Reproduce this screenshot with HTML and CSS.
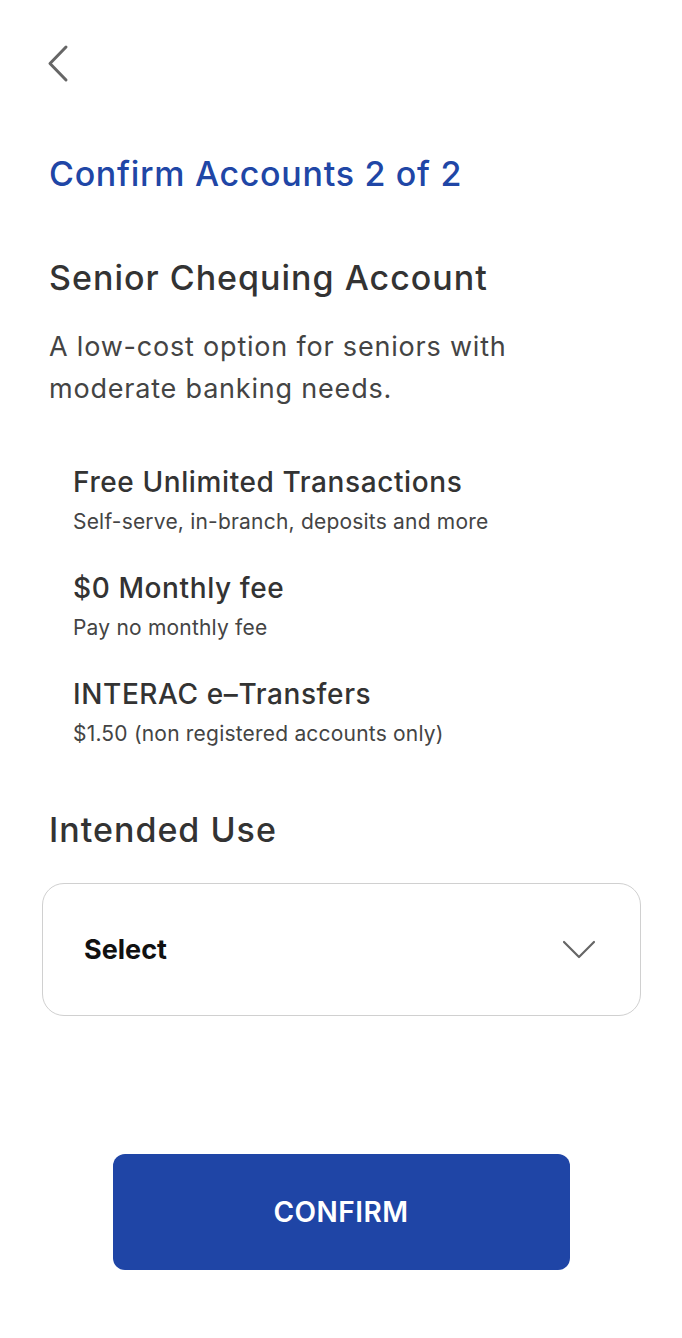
FILE: index.html
```html
<!DOCTYPE html>
<html>
<head>
<meta charset="utf-8">
<link rel="stylesheet" href="styles.css">
</head>
<body>
<div class="screen">
  <div class="back">
    <svg width="24" height="40" viewBox="0 0 24 40"><path d="M20 3 L4 19.5 L20 36" fill="none" stroke="#666" stroke-width="3" stroke-linecap="round" stroke-linejoin="round"/></svg>
  </div>
  <h1 class="title">Confirm Accounts 2 of 2</h1>
  <h2 class="acct">Senior Chequing Account</h2>
  <p class="desc">A low-cost option for seniors with moderate banking needs.</p>
  <ul class="features">
    <li class="feature"><div class="f-name">Free Unlimited Transactions</div><div class="f-sub">Self-serve, in-branch, deposits and more</div></li>
    <li class="feature"><div class="f-name">$0 Monthly fee</div><div class="f-sub">Pay no monthly fee</div></li>
    <li class="feature"><div class="f-name">INTERAC e–Transfers</div><div class="f-sub">$1.50 (non registered accounts only)</div></li>
  </ul>
  <h2 class="use">Intended Use</h2>
  <div class="select">
    <span class="select-text">Select</span>
    <svg class="chev" width="34" height="22" viewBox="0 0 34 22"><path d="M2 3 L17 18 L32 3" fill="none" stroke="#666" stroke-width="2.2" stroke-linecap="round" stroke-linejoin="round"/></svg>
  </div>
  <div class="actions">
    <button class="confirm">CONFIRM</button>
  </div>
</div>
</body>
</html>
```
FILE: styles.css
```css
* { box-sizing: border-box; }
html, body { margin: 0; padding: 0; background: #fff; }
body { font-family: Inter, "Noto Sans", sans-serif; color: #333; }
.screen { width: 682px; height: 1338px; padding: 44px 0 0 0; }
.back { margin-left: 46px; height: 40px; }
.back svg { display: block; }
.title { margin: 70px 0 0 49px; font-size: 34px; font-weight: 500; color: #2046a6; line-height: 40px; letter-spacing: 0.7px; }
.acct { margin: 64px 0 0 49px; font-size: 34px; font-weight: 500; color: #333; line-height: 40px; letter-spacing: 1px; }
.desc { margin: 28px 0 0 49px; font-size: 27px; line-height: 42px; color: #444; width: 560px; letter-spacing: 0.8px; }
.features { list-style: none; margin: 55px 0 0 73px; padding: 0; display: flex; flex-direction: column; gap: 32px; }
.f-name { font-size: 28px; font-weight: 500; line-height: 34px; color: #333; letter-spacing: 0.6px; }
.f-sub { font-size: 21px; line-height: 34px; color: #444; margin-top: 6px; letter-spacing: 0.2px; }
.use { margin: 59px 0 0 49px; font-size: 34px; font-weight: 500; line-height: 40px; color: #333; letter-spacing: 1px; }
.select { margin: 33px 0 0 42px; width: 599px; height: 133px; border: 1.5px solid #d0d0d0; border-radius: 22px; display: flex; align-items: center; justify-content: space-between; padding: 0 44px 0 41px; }
.select-text { font-size: 27px; font-weight: 700; color: #111; }
.chev { display: block; }
.actions { display: flex; justify-content: center; margin-top: 138px; }
.confirm { width: 457px; height: 116px; background: #1f45a6; color: #fff; border: none; border-radius: 12px; font-family: Inter, "Noto Sans", sans-serif; font-size: 28px; font-weight: 600; letter-spacing: 0.5px; }
```
